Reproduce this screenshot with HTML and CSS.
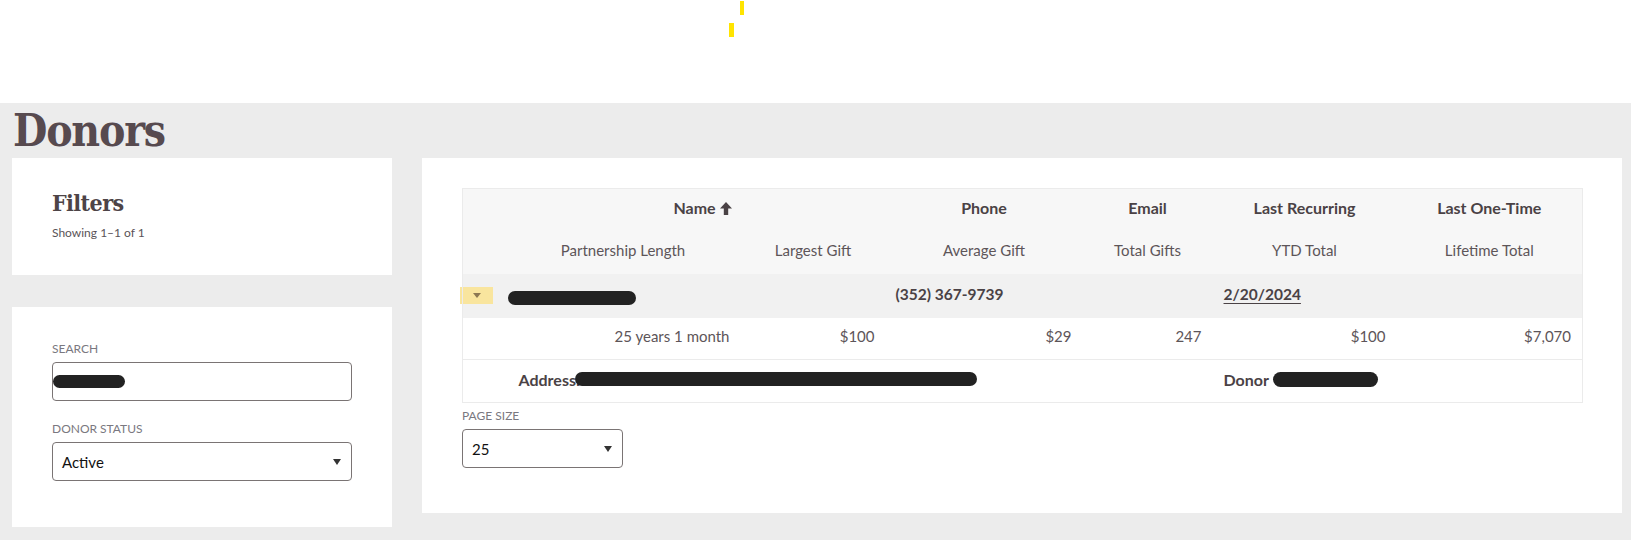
FILE: index.html
```html
<!DOCTYPE html>
<html lang="en">
<head>
<meta charset="utf-8">
<title>Donors</title>
<link rel="stylesheet" href="styles.css">
</head>
<body>
<header class="topbar">
  <span class="spin spin-a"></span>
  <span class="spin spin-b"></span>
</header>
<h1 class="page-title">Donors</h1>
<div class="layout">
  <aside class="sidebar">
    <section class="card filters-card">
      <h2 class="card-title">Filters</h2>
      <p class="showing">Showing 1–1 of 1</p>
    </section>
    <section class="card form-card">
      <div class="field-label">SEARCH</div>
      <div class="input"><span class="redact redact-search"></span></div>
      <div class="field-label status-label">DONOR STATUS</div>
      <div class="select"><span class="select-value">Active</span><span class="caret"></span></div>
    </section>
  </aside>
  <main class="card main-card">
    <table class="donors">
      <colgroup>
        <col class="c-toggle">
        <col class="c-partner">
        <col class="c-largest">
        <col class="c-average">
        <col class="c-total">
        <col class="c-ytd">
        <col class="c-life">
      </colgroup>
      <thead>
        <tr class="head-main">
          <th></th>
          <th colspan="2" class="name-th">Name <svg class="sort-arrow" width="12" height="13" viewBox="0 0 12 13"><path d="M6 0 L12 6.5 H8.2 V13 H3.8 V6.5 H0 Z"/></svg></th>
          <th>Phone</th>
          <th>Email</th>
          <th>Last Recurring</th>
          <th>Last One-Time</th>
        </tr>
        <tr class="head-sub">
          <th></th>
          <th>Partnership Length</th>
          <th>Largest Gift</th>
          <th>Average Gift</th>
          <th>Total Gifts</th>
          <th>YTD Total</th>
          <th>Lifetime Total</th>
        </tr>
      </thead>
      <tbody>
        <tr class="row-main">
          <td class="toggle-cell"><span class="toggle"><span class="toggle-caret"></span></span></td>
          <td colspan="2" class="name-cell"><span class="redact redact-name"></span></td>
          <td class="phone">(352) 367-9739</td>
          <td></td>
          <td class="date"><a href="#">2/20/2024</a></td>
          <td></td>
        </tr>
        <tr class="row-stats">
          <td></td>
          <td class="num">25 years 1 month</td>
          <td class="num">$100</td>
          <td class="num">$29</td>
          <td class="num">247</td>
          <td class="num">$100</td>
          <td class="num">$7,070</td>
        </tr>
        <tr class="row-detail">
          <td></td>
          <td colspan="4" class="address"><strong>Address:</strong><span class="redact redact-address"></span></td>
          <td colspan="2" class="donor"><strong>Donor</strong><span class="redact redact-donor"></span></td>
        </tr>
      </tbody>
    </table>
    <div class="field-label page-label">PAGE SIZE</div>
    <div class="select page-select"><span class="select-value">25</span><span class="caret"></span></div>
  </main>
</div>
</body>
</html>
```

FILE: styles.css
```css
* { box-sizing: border-box; }

html, body {
  margin: 0;
  padding: 0;
}

body {
  background: #ececec;
  font-family: Lato, "Liberation Sans", sans-serif;
  color: #4d4447;
  width: 1631px;
  height: 540px;
  overflow: hidden;
}

.topbar {
  position: relative;
  height: 103px;
  background: #ffffff;
}

.spin {
  position: absolute;
  background: #ffe400;
}
.spin-a { left: 740px; top: 1px; width: 4px; height: 14px; }
.spin-b { left: 729px; top: 23px; width: 5px; height: 14px; }

.page-title {
  margin: 0;
  padding-left: 13px;
  height: 55px;
  font-family: "DejaVu Serif Condensed", "DejaVu Serif", serif;
  font-stretch: condensed;
  font-weight: bold;
  font-size: 44px;
  letter-spacing: -1.2px;
  line-height: 56px;
  color: #574a4f;
}

.layout {
  display: grid;
  grid-template-columns: 380px 1200px;
  column-gap: 30px;
  padding-left: 12px;
  align-items: start;
}

.sidebar {
  display: flex;
  flex-direction: column;
  gap: 32px;
}

.card {
  background: #ffffff;
}

.filters-card {
  height: 117px;
  padding: 30px 40px 0;
}

.card-title {
  margin: 0;
  font-family: "DejaVu Serif Condensed", "DejaVu Serif", serif;
  font-stretch: condensed;
  font-weight: bold;
  font-size: 23px;
  letter-spacing: -0.6px;
  line-height: 30px;
  color: #4d4447;
}

.showing {
  margin: 7px 0 0;
  font-size: 12px;
  line-height: 16px;
  color: #5a5358;
}

.form-card {
  height: 220px;
  padding: 34px 40px 0;
}

.field-label {
  font-size: 12px;
  line-height: 16px;
  color: #7a7880;
}

.status-label { margin-top: 20px; }

.input {
  margin-top: 5px;
  width: 300px;
  height: 39px;
  border: 1px solid #7a7474;
  border-radius: 4px;
  display: flex;
  align-items: center;
  background: #fff;
}

.select {
  margin-top: 5px;
  width: 300px;
  height: 39px;
  border: 1px solid #7a7474;
  border-radius: 4px;
  display: flex;
  align-items: center;
  justify-content: space-between;
  padding: 0 10px 0 9px;
  background: #fff;
}

.select-value {
  font-size: 15px;
  color: #111;
}

.caret {
  width: 0;
  height: 0;
  border-left: 4px solid transparent;
  border-right: 4px solid transparent;
  border-top: 6px solid #333;
}

.redact {
  display: inline-block;
  background: #222222;
  border-radius: 8px;
  vertical-align: middle;
}
.redact-search { width: 72px; height: 13px; }
.redact-name { width: 128px; height: 14px; }
.redact-address { width: 402px; height: 14px; margin-left: -5px; margin-top: -4px; }
.redact-donor { width: 105px; height: 15px; margin-left: 4px; margin-top: -3px; }

.main-card {
  padding: 30px 40px 46px;
  height: 355px;
}

.donors {
  width: 1120px;
  table-layout: fixed;
  border-collapse: collapse;
  border: 1px solid #ebebeb;
  font-size: 15px;
}

.c-toggle { width: 43px; }
.c-partner { width: 235px; }
.c-largest { width: 145px; }
.c-average { width: 197px; }
.c-total { width: 130px; }
.c-ytd { width: 184px; }
.c-life { width: 186px; }

.donors th,
.donors td {
  padding: 0 11px 4px;
  white-space: nowrap;
}

.donors thead tr { background: #f7f7f7; }

.head-main { height: 42px; }
.head-main th {
  font-size: 16px;
  font-weight: bold;
  color: #4a4245;
  text-align: center;
}
.name-th { padding-left: 25px !important; }

.sort-arrow {
  fill: #4a4245;
  vertical-align: -1px;
}

.head-sub { height: 43px; }
.head-sub th {
  font-weight: normal;
  color: #5d5559;
  text-align: center;
}

.row-main {
  height: 44px;
  background: #f1f1f1;
}
.row-main td {
  font-size: 15.5px;
  font-weight: bold;
  color: #4a4245;
}

.toggle-cell { padding: 0 !important; }

.toggle {
  display: flex;
  align-items: center;
  justify-content: center;
  width: 33px;
  height: 17px;
  margin-left: -3px;
  background: #f9e59e;
}

.toggle-caret {
  width: 0;
  height: 0;
  border-left: 4px solid transparent;
  border-right: 4px solid transparent;
  border-top: 5px solid #8c7853;
}

.name-cell { padding-left: 2px !important; padding-bottom: 0 !important; }
.phone { padding-left: 10px !important; }

.date a {
  color: #4a4245;
  text-decoration: underline;
  text-underline-offset: 3px;
}

.row-stats {
  height: 42px;
  background: #fff;
}
.row-stats td {
  border-bottom: 1px solid #ebebeb;
  color: #5d5559;
}

.num { text-align: right; }

.row-detail {
  height: 43px;
  background: #fff;
}
.row-detail td {
  font-size: 16px;
  color: #4a4245;
}

.address { padding-left: 13px !important; }

.page-label { margin-top: 5px; }

.page-select {
  width: 161px;
}
```
